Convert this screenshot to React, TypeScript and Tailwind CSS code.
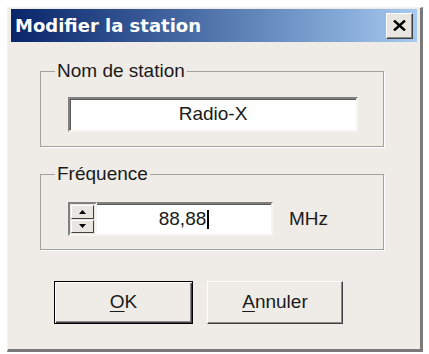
import React from "react";

const sans = { fontFamily: '"Liberation Sans", Arial, sans-serif' };

function CloseIcon() {
  return (
    <svg width="13" height="11" viewBox="0 0 13 11">
      <path d="M1 0.5 L12 10.5 M12 0.5 L1 10.5" stroke="#000" strokeWidth="2.4" />
    </svg>
  );
}

function Triangle({ up }: { up?: boolean }) {
  return (
    <svg width="7" height="4" viewBox="0 0 7 4">
      <path d={up ? "M3.5 0 L7 4 L0 4 Z" : "M0 0 L7 0 L3.5 4 Z"} fill="#000" />
    </svg>
  );
}

function GroupBox({
  label,
  className,
  children,
}: {
  label: string;
  className: string;
  children: React.ReactNode;
}) {
  return (
    <fieldset
      className={`border border-[#a3a19c] shadow-[1px_1px_0_#fff] ${className}`}
    >
      <legend className="ml-[14px] px-[2px] text-[19px] leading-[22px] text-[#1a1a1a]">
        {label}
      </legend>
      {children}
    </fieldset>
  );
}

export default function App() {
  return (
    <div className="h-[354px] w-[429px] overflow-hidden bg-white" style={sans}>
      {/* Window */}
      <div className="ml-[7px] mt-[7px] flex h-[345px] w-[416px] flex-col border-l border-t border-[#f4f2ee] border-r-[3px] border-b-[3px] border-r-[#7a7a7a] border-b-[#7a7a7a] bg-[#efece8] px-[3px] pt-[1px]">
        {/* Title bar */}
        <div className="flex h-[33px] items-center justify-between bg-gradient-to-r from-[#0a246a] to-[#a6caf0] pl-[4px] pr-[4px]">
          <span
            className="text-[18px] font-bold leading-none text-white"
            style={{ fontFamily: '"DejaVu Sans", Verdana, sans-serif' }}
          >
            Modifier la station
          </span>
          <div className="flex h-[26px] w-[27px] items-center justify-center border border-t-[#fff] border-l-[#fff] border-r-[#404040] border-b-[#404040] bg-[#e9e6e1] shadow-[inset_-1px_-1px_0_#8a8a8a]">
            <CloseIcon />
          </div>
        </div>

        {/* Nom de station */}
        <GroupBox label="Nom de station" className="ml-[29px] mt-[18px] w-[344px] pb-[14px]">
          <div className="ml-[27px] mt-[15px] flex h-[35px] w-[290px] items-center justify-center border-2 border-t-[#808080] border-l-[#808080] border-r-[#f6f5f2] border-b-[#f6f5f2] bg-white text-[19px] text-[#1a1a1a] shadow-[inset_1px_1px_0_#5a5a5a]">
            Radio-X
          </div>
        </GroupBox>

        {/* Fréquence */}
        <GroupBox label="Fréquence" className="ml-[29px] mt-[16px] w-[344px] pb-[13px]">
          <div className="ml-[27px] mt-[17px] flex items-center">
            <div className="flex h-[34px] w-[29px] flex-col justify-center gap-[1px] border-2 border-t-[#808080] border-l-[#808080] border-r-[#f6f5f2] border-b-[#f6f5f2] bg-[#e9e6e1] p-[1px]">
              <div className="flex flex-1 items-center justify-center border border-t-[#fff] border-l-[#fff] border-r-[#404040] border-b-[#404040] bg-[#e9e6e1]">
                <Triangle up />
              </div>
              <div className="flex flex-1 items-center justify-center border border-t-[#fff] border-l-[#fff] border-r-[#404040] border-b-[#404040] bg-[#e9e6e1]">
                <Triangle />
              </div>
            </div>
            <div className="flex h-[34px] w-[176px] items-center justify-center border-2 border-l-0 border-t-[#808080] border-r-[#f6f5f2] border-b-[#f6f5f2] bg-white text-[19px] text-[#1a1a1a] shadow-[inset_0_1px_0_#5a5a5a]">
              88,88
              <span className="ml-[1px] h-[19px] w-[2px] bg-black" />
            </div>
            <span className="ml-[16px] text-[19px] text-[#1a1a1a]">MHz</span>
          </div>
        </GroupBox>

        {/* Buttons */}
        <div className="ml-[43px] mt-[31px] flex gap-[14px]">
          <div className="flex h-[43px] w-[139px] items-center justify-center border border-black bg-[#efece8] text-[19px] text-[#1a1a1a] shadow-[inset_1px_1px_0_#fff,inset_-1px_-1px_0_#404040,inset_-2px_-2px_0_#8a8a8a]">
            <span>
              <span className="underline underline-offset-[3px]">O</span>K
            </span>
          </div>
          <div className="flex h-[43px] w-[136px] items-center justify-center border border-t-[#fff] border-l-[#fff] border-r-[#404040] border-b-[#404040] bg-[#efece8] text-[19px] text-[#1a1a1a] shadow-[inset_-1px_-1px_0_#8a8a8a]">
            <span>
              <span className="underline underline-offset-[3px]">A</span>nnuler
            </span>
          </div>
        </div>
      </div>
    </div>
  );
}
